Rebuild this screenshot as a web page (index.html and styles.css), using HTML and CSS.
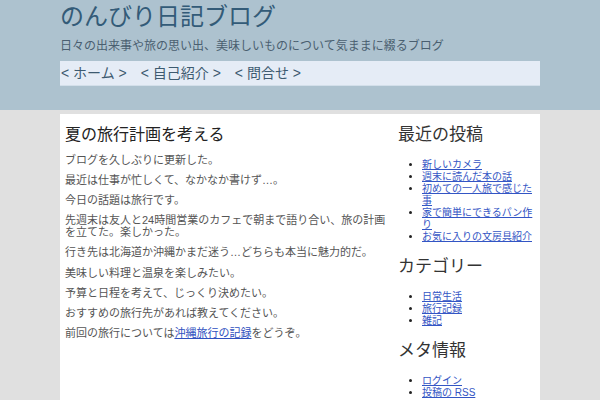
FILE: index.html
```html
<!DOCTYPE html>
<html lang="ja">
<head>
<meta charset="utf-8">
<title>のんびり日記ブログ</title>
<link rel="stylesheet" href="styles.css">
</head>
<body>
<header class="site-header">
  <div class="wrap">
    <h1 class="site-title">のんびり日記ブログ</h1>
    <p class="tagline">日々の出来事や旅の思い出、美味しいものについて気ままに綴るブログ</p>
    <nav class="nav">
      <a class="nav-item" href="#">&lt; ホーム &gt;</a>
      <a class="nav-item" href="#">&lt; 自己紹介 &gt;</a>
      <a class="nav-item" href="#">&lt; 問合せ &gt;</a>
    </nav>
  </div>
</header>
<div class="wrap main">
  <main class="content">
    <h2 class="post-title">夏の旅行計画を考える</h2>
    <p>ブログを久しぶりに更新した。</p>
    <p>最近は仕事が忙しくて、なかなか書けず…。</p>
    <p>今日の話題は旅行です。</p>
    <p>先週末は友人と24時間営業のカフェで朝まで語り合い、旅の計画を立てた。楽しかった。</p>
    <p>行き先は北海道か沖縄かまだ迷う…どちらも本当に魅力的だ。</p>
    <p>美味しい料理と温泉を楽しみたい。</p>
    <p>予算と日程を考えて、じっくり決めたい。</p>
    <p>おすすめの旅行先があれば教えてください。</p>
    <p>前回の旅行については<a href="#">沖縄旅行の記録</a>をどうぞ。</p>
  </main>
  <aside class="sidebar">
    <h2 class="widget-title">最近の投稿</h2>
    <ul class="widget-list">
      <li><a href="#">新しいカメラ</a></li>
      <li><a href="#">週末に読んだ本の話</a></li>
      <li><a href="#">初めての一人旅で感じた事</a></li>
      <li><a href="#">家で簡単にできるパン作り</a></li>
      <li><a href="#">お気に入りの文房具紹介</a></li>
    </ul>
    <h2 class="widget-title">カテゴリー</h2>
    <ul class="widget-list">
      <li><a href="#">日常生活</a></li>
      <li><a href="#">旅行記録</a></li>
      <li><a href="#">雑記</a></li>
    </ul>
    <h2 class="widget-title">メタ情報</h2>
    <ul class="widget-list">
      <li><a href="#">ログイン</a></li>
      <li><a href="#">投稿の RSS</a></li>
      <li><a href="#">コメントの RSS</a></li>
      <li><a href="#">WordPress.org</a></li>
    </ul>
  </aside>
</div>
</body>
</html>
```
FILE: styles.css
```css
html, body {
  margin: 0;
  padding: 0;
}
body {
  background: #e0e0e0;
  font-family: "Liberation Sans", "Noto Sans CJK JP", sans-serif;
  color: #555;
}
.wrap {
  width: 480px;
  margin: 0 auto;
}
.site-header {
  background: #adc2cf;
  padding: 2px 0 24px;
}
.site-title {
  margin: 0;
  font-size: 24px;
  line-height: 30px;
  font-weight: normal;
  color: #335b78;
}
.tagline {
  margin: 6px 0 0;
  font-size: 12px;
  line-height: 16px;
  color: #4a5f70;
}
.nav {
  margin-top: 7px;
  background: #e5ecf6;
  border-bottom: 1px solid #d3dfea;
  height: 24px;
  line-height: 24px;
  padding-left: 1px;
  font-size: 14px;
  display: flex;
  gap: 14px;
}
.nav-item {
  color: #3d5a70;
  text-decoration: none;
}
.main {
  margin-top: 4px;
  background: #fff;
  padding: 0 5px 20px;
  box-sizing: border-box;
  display: grid;
  grid-template-columns: 1fr 137px;
  gap: 8px;
}
.post-title {
  margin: 10px 0 8px;
  font-size: 16px;
  line-height: 22px;
  font-weight: normal;
  color: #222;
}
.content p {
  margin: 8px 0;
  font-size: 11px;
  line-height: 12.1px;
  color: #555;
}
.content a {
  color: #3050c0;
}
.widget-title {
  margin: 13px 0 0;
  font-size: 17px;
  line-height: 22px;
  font-weight: normal;
  color: #333;
}
.sidebar .widget-title:first-child {
  margin-top: 10px;
}
.widget-list {
  margin: 13px 0;
  padding-left: 24px;
  font-size: 10px;
  line-height: 12px;
  color: #222;
}
.widget-list a {
  color: #3355c4;
}
```
